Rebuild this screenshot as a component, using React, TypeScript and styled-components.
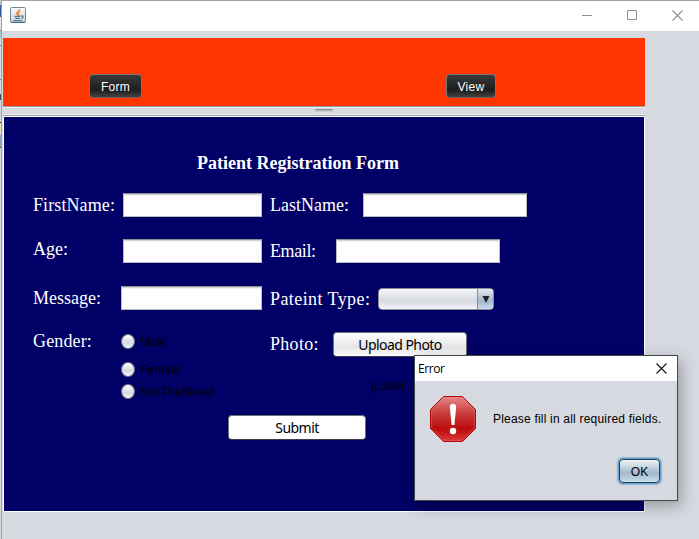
import React from 'react';
import styled, { createGlobalStyle } from 'styled-components';

const GlobalStyle = createGlobalStyle`
  * { box-sizing: border-box; }
  html, body { margin: 0; padding: 0; overflow: hidden; }
  body { font-family: "Liberation Sans", Arial, sans-serif; background: #d6d9e0; }
  button, input { font: inherit; margin: 0; padding: 0; }
`;

const Desktop = styled.div`
  position: relative;
  display: flex;
  width: 699px;
  height: 539px;
  overflow: hidden;
  background: #d6d9e0;
`;

const BackEdge = styled.div`
  flex: none;
  width: 2px;
  border-right: 1px solid #a2a2a6;
  background: linear-gradient(
    #c3c8d2 0 5px, #33549c 5px 17px, #e4e4e4 17px 30px, #68757d 30px 31px,
    #9ed0e4 31px 38px, #d8dade 38px 45px, #777 45px 46px, #d8dade 46px 79px,
    #777 79px 80px, #d8dade 80px 94px, #444 94px 100px, #d8dade 100px 122px,
    #341818 122px 123px, #e7dcae 123px 131px, #d8dade 131px 135px, #8e9cb8 135px 147px,
    #444 147px 148px, #d6d7dc 148px
  );
`;

const Frame = styled.main`
  flex: 1;
  display: flex;
  flex-direction: column;
  border-top: 1px solid #a3a3a3;
`;

const TitleBar = styled.header`
  flex: none;
  display: flex;
  align-items: center;
  justify-content: space-between;
  height: 30px;
  padding: 0 15px 2px 8px;
  background: #fff;
`;

const WindowControls = styled.div`
  display: flex;
  gap: 34px;
  margin-right: 1px;
  svg { display: block; }
`;

const Content = styled.div`
  flex: 1;
  width: 643px;
  padding: 7px 0 0 1px;
`;

const TopPanel = styled.nav`
  display: flex;
  height: 68px;
  padding: 36px 0 0 86px;
  background: #ff3500;
`;

const NavButton = styled.button<{ $w: number; $gap?: number }>`
  width: ${p => p.$w}px;
  height: 24px;
  margin-left: ${p => p.$gap ?? 0}px;
  border: 1px solid #777;
  border-bottom-color: #68605e;
  border-radius: 4px;
  background: linear-gradient(#3a3a3a, #1d1d1d 68%, #424242);
  color: #fff;
  font-size: 12px;
  line-height: 22px;
  padding-top: 1px;
  letter-spacing: 0.3px;
`;

const Divider = styled.div`
  display: flex;
  justify-content: center;
  height: 10px;
  padding-top: 2px;
  border-top: 1px solid #969aa1;
  border-bottom: 1px solid #969aa1;
  box-shadow: inset 0 1px #f0f1f3, inset 0 -1px #eceef0;
`;

const Grip = styled.div`
  width: 18px;
  height: 4px;
  border-radius: 2px;
  border-top: 1px solid #888d98;
  background: linear-gradient(#a7abb6, #e9ebf0);
`;

const FormPanel = styled.form`
  height: 396px;
  padding: 34px 0 0 29px;
  border: 1px solid #fff;
  background: #000066;
`;

const Heading = styled.h1`
  height: 42px;
  margin: 0 0 0 164px;
  color: #fff;
  font: bold 18px/24px "Liberation Serif", serif;
`;

const Row = styled.div<{ $h: number }>`
  display: grid;
  grid-template-columns: 237px 1fr;
  height: ${p => p.$h}px;
`;

const Cell = styled.div`
  display: flex;
  align-items: flex-start;
`;

const Label = styled.label<{ $w: number; $drop?: number; $track?: number }>`
  flex: none;
  width: ${p => p.$w}px;
  margin-top: ${p => p.$drop ?? 0}px;
  color: #fff;
  font: 18px/24px "Liberation Serif", serif;
  letter-spacing: ${p => p.$track ?? 0}px;
  white-space: nowrap;
`;

const TextField = styled.input<{ $w: number }>`
  width: ${p => p.$w}px;
  height: 24px;
  border: 1px solid #b7babf;
  border-top-color: #8d8e91;
  border-radius: 0;
  outline: none;
  background: #fff;
  box-shadow: inset 0 1px #d4d5d7, inset 0 2px #f2f2f4;
`;

const Combo = styled.div`
  display: flex;
  justify-content: flex-end;
  width: 116px;
  height: 22px;
  margin-top: 2px;
  overflow: hidden;
  border: 1px solid #8b8f98;
  border-radius: 4px;
  background: linear-gradient(#f6f7f8, #d5d8de 60%, #f5f7fa);
`;

const ComboArrow = styled.span`
  display: grid;
  place-items: center;
  width: 16px;
  border-left: 1px solid #7e93a8;
  background: linear-gradient(#e3e9ef, #a3b8cb 60%, #c9dcec);
`;

const PushButton = styled.button<{ $w: number; $plain?: boolean }>`
  display: block;
  width: ${p => p.$w}px;
  height: 25px;
  border: 1px solid #6f7178;
  border-bottom-color: #3d3e4a;
  border-radius: 4px;
  background: ${p => (p.$plain ? '#fff' : 'linear-gradient(#fff, #e6e6e6 60%, #fbfbfb)')};
  color: #000;
  font: 14px/23px "Noto Sans", Tahoma, sans-serif;
  letter-spacing: -0.55px;
`;

const RadioGroup = styled.div`
  display: grid;
  grid-template-rows: 28px 22px 22px;
  padding-top: 1px;
`;

const RadioOption = styled.label`
  display: flex;
  align-items: center;
  gap: 5px;
  height: 17px;
  color: #000;
  font-size: 12px;
  letter-spacing: 0.2px;
`;

const RadioDot = styled.span`
  width: 14px;
  height: 15px;
  border: 1px solid #777a83;
  border-radius: 50%;
  background: linear-gradient(#fff, #d4d7de 60%, #f5f7fa);
`;

const PhotoArea = styled.div`
  flex: none;
`;

const FileLabel = styled.p`
  margin: 22px 0 0 38px;
  color: #000;
  font-size: 12px;
  line-height: 14px;
  letter-spacing: 0.3px;
`;

const SubmitLine = styled.div`
  padding-left: 195px;
`;

const Dialog = styled.section`
  position: absolute;
  left: 414px;
  top: 355px;
  width: 264px;
  height: 146px;
  border: 1px solid #45474b;
  background: #d6d9e0;
  box-shadow: 3px 5px 14px rgba(0, 0, 0, 0.3);
`;

const DialogTitle = styled.header`
  display: flex;
  align-items: center;
  justify-content: space-between;
  height: 25px;
  padding: 0 10px 0 3px;
  background: #fff;
  color: #000;
  font: 12px/24px "Open Sans", sans-serif;
  letter-spacing: -0.45px;
`;

const Message = styled.div`
  display: flex;
  align-items: center;
  gap: 16px;
  padding: 14px 0 0 14px;
  color: #000;
  font-size: 12px;
  letter-spacing: 0.2px;
  white-space: nowrap;
  svg { flex: none; }
`;

const OkButton = styled.button`
  display: block;
  width: 41px;
  height: 24px;
  margin: 16px 0 0 204px;
  border: 1px solid #25425c;
  border-radius: 4px;
  background: linear-gradient(#eef2f5, #a3b8ca 60%, #c8dded);
  box-shadow: 0 0 0 1px #649fce, 0 0 1px 2px #8db4d6;
  color: #000;
  font-size: 12px;
  line-height: 22px;
  padding-top: 1px;
`;

const JavaIcon = () => (
  <svg width="16" height="16" viewBox="0 0 16 16">
    <defs>
      <linearGradient id="cup" x2="0" y2="1">
        <stop stopColor="#f8fafb" />
        <stop offset="1" stopColor="#c9d5dd" />
      </linearGradient>
    </defs>
    <rect x=".5" y=".5" width="15" height="15" rx="1" fill="url(#cup)" stroke="#72899b" />
    <path d="M1 15.3h14" stroke="#355a76" />
    <path d="M9.8 2.3C9.8 4.2 6.5 4.5 6.7 6.2c.1 1 1.2 1.3 1.3 2.5M10.5 4.8c-2.2.8-2.5 1.6-1.8 2.7.3.5.1.9-.3 1.3" fill="none" stroke="#e8791c" strokeWidth="1.2" />
    <path d="M4.5 9.4h6M5.3 11.4h4.6M3.5 13.5h8.5M11 9c3-.8 2.8 2 .2 2.4" fill="none" stroke="#4e7693" strokeWidth="1.1" />
  </svg>
);

const ErrorIcon = () => (
  <svg width="48" height="48" viewBox="0 0 48 48">
    <defs>
      <linearGradient id="stop" x2="0" y2="1">
        <stop stopColor="#e58a8a" />
        <stop offset=".35" stopColor="#cb3f3f" />
        <stop offset=".72" stopColor="#b90c0c" />
        <stop offset="1" stopColor="#e03838" />
      </linearGradient>
    </defs>
    <path d="M14.5 1.5h19l13 13v19l-13 13h-19l-13-13v-19z" fill="url(#stop)" stroke="#b00b0b" />
    <path d="M15 2.7h18L45.3 15v18L33 45.3H15L2.7 33V15z" fill="none" stroke="#f08080" strokeOpacity=".35" />
    <path d="M20.8 12c0-4.2 6.4-4.2 6.4 0L25.4 30h-2.8z" fill="#fff" />
    <circle cx="24" cy="36" r="3.2" fill="#fff" />
  </svg>
);

const genders = ['Male', 'Female', 'Not Preffered'];

export default function App() {
  return (
    <>
      <GlobalStyle />
      <Desktop>
        <BackEdge />
        <Frame>
          <TitleBar>
            <JavaIcon />
            <WindowControls>
              <svg width="11" height="11"><path d="M0 5.5h10" stroke="#8e8e8e" /></svg>
              <svg width="11" height="11"><path d="M.5.5h9v9h-9z" fill="none" stroke="#8e8e8e" /></svg>
              <svg width="11" height="11"><path d="M.5.5l10 10M10.5.5l-10 10" stroke="#8e8e8e" strokeWidth="1.1" /></svg>
            </WindowControls>
          </TitleBar>
          <Content>
            <TopPanel>
              <NavButton $w={53}>Form</NavButton>
              <NavButton $w={50} $gap={304}>View</NavButton>
            </TopPanel>
            <Divider><Grip /></Divider>
            <FormPanel>
              <Heading>Patient Registration Form</Heading>
              <Row $h={46}>
                <Cell>
                  <Label $w={90} $track={0.1}>FirstName:</Label>
                  <TextField $w={139} />
                </Cell>
                <Cell>
                  <Label $w={93}>LastName:</Label>
                  <TextField $w={164} />
                </Cell>
              </Row>
              <Row $h={47}>
                <Cell>
                  <Label $w={90} $drop={-2}>Age:</Label>
                  <TextField $w={139} />
                </Cell>
                <Cell>
                  <Label $w={66} $track={-0.4}>Email:</Label>
                  <TextField $w={164} />
                </Cell>
              </Row>
              <Row $h={46}>
                <Cell>
                  <Label $w={88}>Message:</Label>
                  <TextField $w={141} />
                </Cell>
                <Cell>
                  <Label $w={108} $drop={1} $track={0.42}>Pateint Type:</Label>
                  <Combo>
                    <ComboArrow>
                      <svg width="8" height="7"><path d="M.5 0h7L4 7z" fill="#222" /></svg>
                    </ComboArrow>
                  </Combo>
                </Cell>
              </Row>
              <Row $h={83}>
                <Cell>
                  <Label $w={88} $drop={-3} $track={0.15}>Gender:</Label>
                  <RadioGroup>
                    {genders.map(g => (
                      <RadioOption key={g}><RadioDot />{g}</RadioOption>
                    ))}
                  </RadioGroup>
                </Cell>
                <Cell>
                  <Label $w={63} $track={0.3}>Photo:</Label>
                  <PhotoArea>
                    <PushButton type="button" $w={134}>Upload Photo</PushButton>
                    <FileLabel>jLabel</FileLabel>
                  </PhotoArea>
                </Cell>
              </Row>
              <SubmitLine>
                <PushButton type="button" $w={138} $plain>Submit</PushButton>
              </SubmitLine>
            </FormPanel>
          </Content>
        </Frame>
        <Dialog>
          <DialogTitle>
            Error
            <svg width="11" height="11"><path d="M.5.5l10 10M10.5.5l-10 10" stroke="#111" strokeWidth="1.1" /></svg>
          </DialogTitle>
          <Message>
            <ErrorIcon />
            Please fill in all required fields.
          </Message>
          <OkButton>OK</OkButton>
        </Dialog>
      </Desktop>
    </>
  );
}
